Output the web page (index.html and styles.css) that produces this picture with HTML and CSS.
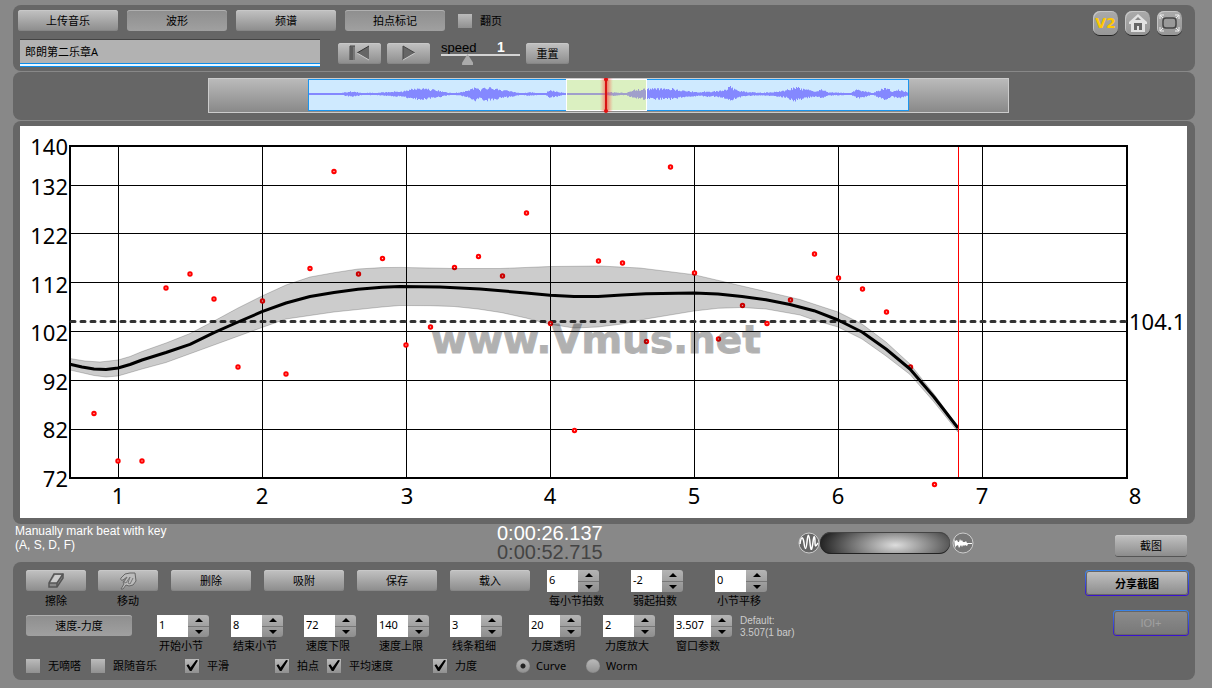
FILE: index.html
```html
<!DOCTYPE html>
<html lang="zh-CN">
<head>
<meta charset="utf-8">
<title>Vmus.net</title>
<link rel="stylesheet" href="styles.css">
</head>
<body>
<header class="panel header">
  <div class="header-main">
    <div class="menu-row">
      <button class="btn wide">上传音乐</button>
      <button class="btn wide pressed">波形</button>
      <button class="btn wide">频谱</button>
      <button class="btn wide pressed">拍点标记</button>
      <label class="check flip"><input type="checkbox">翻页</label>
    </div>
    <div class="play-row">
      <input class="track-name" type="text" value="郎朗第二乐章A" aria-label="曲目">
      <button class="btn small" aria-label="回到开头">
        <svg width="22" height="16" viewBox="0 0 22 16"><path d="M1 1h5v14H1z" fill="#777"/><path d="M1 15V1h5M3 2v13" fill="none" stroke="#444"/><path d="M20 1v14L8 8z" fill="#666"/><path d="M20 1L8 8" stroke="#333"/><path d="M8 8l12 7" stroke="#ccc"/></svg>
      </button>
      <button class="btn small" aria-label="播放">
        <svg width="16" height="16" viewBox="0 0 16 16"><path d="M2 1v14l12-7z" fill="#666"/><path d="M2 15V1l12 7" fill="none" stroke="#444"/><path d="M14 8L2 15" stroke="#ccc"/></svg>
      </button>
      <div class="speed">
        <label for="speed">speed</label><output for="speed">1</output>
        <input id="speed" type="range" min="0" max="100" value="31">
      </div>
      <button class="btn small">重置</button>
    </div>
  </div>
  <nav class="corner">
    <button class="tile v2">V2</button>
    <button class="tile" aria-label="主页">
      <svg width="22" height="20" viewBox="0 0 22 20"><path d="M2 9l9-8 9 8v2h-2v8H4v-8H2z" fill="#e2e2e2"/><path d="M7 17v-7h8v7h-3v-4h-2v4z" fill="#666"/><path d="M8 7l3-3 3 3z" fill="#888"/></svg>
    </button>
    <button class="tile" aria-label="全屏">
      <svg width="23" height="20" viewBox="0 0 23 20" fill="none"><rect x="5" y="5" width="13" height="10" rx="3" fill="#999" stroke="#444" stroke-width="1.5"/><path d="M2 6V2h4M2 2l3 3M17 2h4v4M21 2l-3 3M2 14v4h4M2 18l3-3M17 18h4v-4M21 18l-3-3" stroke="#eee"/></svg>
    </button>
  </nav>
</header>

<section class="panel overview">
  <svg class="overview-svg" viewBox="208 78 801 35">
    <defs>
      <linearGradient id="steel" x1="0" y1="0" x2="0" y2="1"><stop offset="0" stop-color="#bbb"/><stop offset="1" stop-color="#888"/></linearGradient>
      <linearGradient id="glow"><stop offset="0" stop-color="#f55" stop-opacity="0"/><stop offset=".5" stop-color="#f22" stop-opacity=".6"/><stop offset="1" stop-color="#f55" stop-opacity="0"/></linearGradient>
    </defs>
    <rect x="208.5" y="78.5" width="800" height="34" fill="url(#steel)" stroke="#ccc"/>
    <rect x="308.5" y="79.5" width="600" height="31" fill="#cfeaff" stroke="#1b95ee"/>
    <path id="wave" fill="#8488ff"/>
    <rect x="566.5" y="79.5" width="80" height="31" fill="#e2f3a0" fill-opacity=".65" stroke="#fff"/>
    <path id="wave-soft" fill="#a09fcb"/>
    <rect x="600" y="78" width="13" height="34" fill="url(#glow)"/>
    <path d="M606 79v32" stroke="#d81414" stroke-width="2"/>
    <circle cx="606" cy="79.5" r="2" fill="#e01010"/><circle cx="606" cy="111" r="2" fill="#e01010"/>
  </svg>
</section>

<main class="panel chart">
  <svg class="chart-svg" viewBox="20 126 1167 392">
    <g class="grid">
      <path d="M70 185.5H1127M70 233.5H1127M70 282.5H1127M70 331.5H1127M70 380.5H1127M70 429.5H1127M118.5 146V478M262.5 146V478M406.5 146V478M550.5 146V478M694.5 146V478M838.5 146V478M982.5 146V478"/>
      <rect class="frame" x="70" y="146" width="1057" height="332"/>
    </g>
    <path class="average" d="M71 321.5H1126"/>
    <g class="beats">
      <circle cx="94" cy="413.5"/><circle cx="118" cy="461"/><circle cx="142" cy="461"/><circle cx="166" cy="288"/><circle cx="190" cy="274"/><circle cx="214" cy="299"/><circle cx="238" cy="367"/><circle cx="262.5" cy="301"/><circle cx="286" cy="374"/><circle cx="310" cy="268.5"/><circle cx="334" cy="171.5"/><circle cx="358.5" cy="274"/><circle cx="382.5" cy="258.5"/>
      <circle cx="406" cy="345"/><circle cx="430.5" cy="327"/><circle cx="454.5" cy="267.5"/><circle cx="478.5" cy="256.5"/><circle cx="502.5" cy="276"/><circle cx="526.5" cy="213"/><circle cx="550.5" cy="323.5"/><circle cx="574.5" cy="430.5"/><circle cx="598.5" cy="261"/><circle cx="622.5" cy="263"/><circle cx="646.5" cy="341.5"/><circle cx="670.5" cy="167"/><circle cx="694.5" cy="273"/><circle cx="718.5" cy="339"/><circle cx="742.5" cy="305.5"/><circle cx="767" cy="323.5"/><circle cx="790.5" cy="300"/>
      <circle cx="814.5" cy="254"/><circle cx="838.5" cy="278"/><circle cx="862.5" cy="289"/><circle cx="886.5" cy="312"/><circle cx="910.5" cy="367"/><circle cx="934.5" cy="484.5"/>
    </g>
    <polygon class="band" points="70,358.5 85,361 100,362 118,360 130,356.5 142,351.5 166,343 190,333.5 214,321 238,308 262,296 286,285 310,277 334,272.7 358,269 382,267.6 400,267.4 454,268.5 500,268.5 550,266.5 600,266 640,268 694,274.7 742,286 800,299.5 838,312 862,324 886,342 910,364 934,394 958,427 958,432 934,402 910,374.5 886,356 862,339 838,327 814,320 800,315 766,309 742,307.5 718,308.3 694,311 646,319 622,324 598,327 574,328 550,324.3 526,318 502,312.7 478,309 454,306.5 430,305.7 400,305.5 382,307 334,312 286,319 262,327.5 214,345 166,362.5 142,369 118,376 106,377 94,375.5 70,370"/>
    <polyline class="tempo" points="70,364.3 82,367 94,369 106,369.5 118,368 130,364.5 142,360 166,352.5 190,344.3 214,332.7 238,322 262,311.7 286,303 310,296.5 334,292.5 358,289.3 382,287.2 400,286.5 440,287 480,289 526,293 550,295.3 574,296.5 598,296.5 622,295 646,293.7 694,293 718,294 742,296.5 766,299.7 790,304.5 814,310.7 838,320 862,332 886,349 910,369 934,397 958,428"/>
    <text class="watermark" x="431" y="353">www.Vmus.net</text>
    <path d="M958.5 147V477" stroke="#f00"/>
    <g class="axis y-axis">
      <text x="68" y="155">140</text><text x="68" y="195">132</text><text x="68" y="244">122</text><text x="68" y="293">112</text><text x="68" y="341">102</text><text x="68" y="390">92</text><text x="68" y="438">82</text><text x="68" y="487">72</text>
    </g>
    <g class="axis x-axis">
      <text x="118" y="504">1</text><text x="262" y="504">2</text><text x="407" y="504">3</text><text x="550" y="504">4</text><text x="694" y="504">5</text><text x="838" y="504">6</text><text x="982" y="504">7</text><text x="1135" y="504">8</text>
    </g>
    <text class="axis" x="1129" y="330">104.1</text>
  </svg>
</main>

<section class="status">
  <p class="hint">Manually mark beat with key<br>(A, S, D, F)</p>
  <div class="clock"><div>0:00:26.137</div><div class="total">0:00:52.715</div></div>
  <div class="zoom">
    <svg width="22" height="24" viewBox="0 0 22 24" fill="none"><circle cx="11" cy="12" r="10" fill="#666" stroke="#ccc"/><path d="M2 13c1-8 3-8 4-1s2 8 3-1 2-9 3 1 2 7 3-1 2-6 2 0 1 4 3 1" stroke="#fff" stroke-width="1.5"/></svg>
    <div class="zoom-bar"></div>
    <svg width="24" height="24" viewBox="0 0 24 24"><circle cx="13" cy="12" r="10" fill="#777" stroke="#ccc"/><path d="M4 7l1 3 2-1 1 2h1l1-3 1 2 1-1 1 2h2l1-1 1 2h5v1h-4l-1 2-2-1-1 1-1-1-1 2-1-2-2 3-1-3-2 1-1 2z" fill="#fff"/></svg>
  </div>
  <button class="btn snapshot">截图</button>
</section>

<section class="panel controls">
  <div class="control-rows">
    <div class="row-tools">
      <div class="tools">
        <div class="tool"><button class="btn" aria-labelledby="l-erase"><svg width="18" height="17" viewBox="0 0 18 17"><path d="M7 2h9v4l-6 9H2v-4z" fill="#888" stroke="#555" stroke-width="1.5"/><path d="M8 3h7l-5 8H3z" fill="#ccc"/><path d="M2 11h8v4M10 11l6-9" fill="none" stroke="#555" stroke-width="1.5"/></svg></button><span id="l-erase">擦除</span></div>
        <div class="tool"><button class="btn" aria-labelledby="l-move"><svg width="18" height="18" viewBox="0 0 18 18"><path d="M2 17l3-5-1-2 4-5-4 3c-2 1-3-1-2-2l4-4 5-1h5l1 8-3 4-4 1-3-1-3 4z" fill="#bbb" stroke="#666"/><path d="M8 5l-3 5 2 1 4-6M11 5l-2 6 2 1 3-6" fill="none" stroke="#777"/></svg></button><span id="l-move">移动</span></div>
      </div>
      <div class="actions">
        <button class="btn">删除</button><button class="btn">吸附</button><button class="btn">保存</button><button class="btn">载入</button>
      </div>
      <div class="bar-fields">
        <div class="field"><span class="spin"><input id="f1" type="text" value="6"><span class="arrows"><button class="up" aria-label="+"></button><button class="down" aria-label="-"></button></span></span><label for="f1">每小节拍数</label></div>
        <div class="field"><span class="spin"><input id="f2" type="text" value="-2"><span class="arrows"><button class="up" aria-label="+"></button><button class="down" aria-label="-"></button></span></span><label for="f2">弱起拍数</label></div>
        <div class="field"><span class="spin"><input id="f3" type="text" value="0"><span class="arrows"><button class="up" aria-label="+"></button><button class="down" aria-label="-"></button></span></span><label for="f3">小节平移</label></div>
      </div>
    </div>
    <div class="row-params">
      <button class="btn mode pressed">速度-力度</button>
      <div class="field"><span class="spin"><input id="p1" type="text" value="1"><span class="arrows"><button class="up" aria-label="+"></button><button class="down" aria-label="-"></button></span></span><label for="p1">开始小节</label></div>
      <div class="field"><span class="spin"><input id="p2" type="text" value="8"><span class="arrows"><button class="up" aria-label="+"></button><button class="down" aria-label="-"></button></span></span><label for="p2">结束小节</label></div>
      <div class="field"><span class="spin"><input id="p3" type="text" value="72"><span class="arrows"><button class="up" aria-label="+"></button><button class="down" aria-label="-"></button></span></span><label for="p3">速度下限</label></div>
      <div class="field"><span class="spin"><input id="p4" type="text" value="140"><span class="arrows"><button class="up" aria-label="+"></button><button class="down" aria-label="-"></button></span></span><label for="p4">速度上限</label></div>
      <div class="field"><span class="spin"><input id="p5" type="text" value="3"><span class="arrows"><button class="up" aria-label="+"></button><button class="down" aria-label="-"></button></span></span><label for="p5">线条粗细</label></div>
      <div class="field"><span class="spin"><input id="p6" type="text" value="20"><span class="arrows"><button class="up" aria-label="+"></button><button class="down" aria-label="-"></button></span></span><label for="p6">力度透明</label></div>
      <div class="field"><span class="spin"><input id="p7" type="text" value="2"><span class="arrows"><button class="up" aria-label="+"></button><button class="down" aria-label="-"></button></span></span><label for="p7">力度放大</label></div>
      <div class="field"><span class="spin long"><input id="p8" type="text" value="3.507"><span class="arrows"><button class="up" aria-label="+"></button><button class="down" aria-label="-"></button></span></span><label for="p8">窗口参数</label></div>
      <p class="default">Default:<br>3.507(1 bar)</p>
    </div>
    <div class="row-flags">
      <label class="check"><input type="checkbox">无嘀嗒</label>
      <label class="check"><input type="checkbox">跟随音乐</label>
      <label class="check"><input type="checkbox" checked>平滑</label>
      <label class="check"><input type="checkbox" checked>拍点</label>
      <label class="check"><input type="checkbox" checked>平均速度</label>
      <label class="check"><input type="checkbox" checked>力度</label>
      <label class="check radio"><input type="radio" name="view" checked>Curve</label>
      <label class="check radio"><input type="radio" name="view">Worm</label>
    </div>
  </div>
  <div class="share">
    <button class="btn outlined share-btn">分享截图</button>
    <button class="btn outlined ioi" disabled>IOI+</button>
  </div>
</section>
<script src="script.js"></script>
</body>
</html>
```
FILE: styles.css
```css
* { box-sizing: border-box; }

body {
  margin: 0;
  padding: 5px 17px 7px 13px;
  background: #888;
  color: #000;
  font: 11px/15px "Noto Sans", "Noto Sans CJK SC", sans-serif;
}

button, input { font: inherit; color: inherit; margin: 0; }
p { margin: 0; }
svg { display: block; }

.panel {
  background: #666;
  border-radius: 8px;
  margin-bottom: 1px;
}

.btn {
  display: flex;
  align-items: center;
  justify-content: center;
  height: 21px;
  padding: 0;
  border: 0;
  border-radius: 3px;
  background: linear-gradient(#c2c2c2, #8c8c8c);
  box-shadow: inset 0 1px #c8c8c8, inset 0 -1px #868686;
  white-space: nowrap;
}
.btn.pressed {
  background: linear-gradient(#8e8e8e, #a0a0a0);
  box-shadow: inset 0 1px #b0b0b0;
}

/* Header */
.header {
  display: flex;
  justify-content: space-between;
  padding: 5px 13px 4px 5px;
}
.menu-row { display: flex; gap: 9px; }
.wide { width: 100px; }
.flip { margin-left: 4px; }
.play-row {
  display: flex;
  align-items: center;
  gap: 6px;
  margin-top: 8px;
  padding-left: 2px;
}
.track-name {
  width: 300px;
  height: 28px;
  margin-right: 12px;
  padding: 0 5px 5px;
  border: 0;
  border-top: 1px solid #444;
  border-bottom: 1px solid #0b8dea;
  background: linear-gradient(#b2b2b2 23px, #0b8dea 23px, #0b8dea 24px, #eaf6ff 24px);
}
.small { width: 43px; }
.speed {
  display: grid;
  grid-template-columns: 1fr 23px;
  width: 79px;
  margin: 0 0 0 5px;
  font: 13px/13px "Liberation Sans", sans-serif;
}
.speed output { color: #fff; font-size: 14px; font-weight: bold; }
.speed input {
  grid-column: 1 / 3;
  appearance: none;
  width: 79px;
  height: 11px;
  background: linear-gradient(#d4d4d4, #d4d4d4) 0 0 / 100% 2px no-repeat;
}
.speed input::-webkit-slider-thumb {
  appearance: none;
  width: 11px;
  height: 11px;
  background: #aaa;
  clip-path: polygon(50% 0, 100% 80%, 100% 100%, 0 100%, 0 80%);
}

.corner { display: flex; gap: 7px; padding-top: 1px; }
.tile {
  display: flex;
  align-items: center;
  justify-content: center;
  width: 25px;
  height: 24px;
  padding: 0;
  border: 0;
  border-radius: 7px;
  background: linear-gradient(#aaa, #979797);
  box-shadow: inset 1px 1px #c4c4c4, 0 1px #222;
}
.v2 { color: #ffc800; font: bold 14px/24px "DejaVu Sans", sans-serif; }

/* Waveform overview */
.overview { padding: 6px 186px 7px 195px; }
.overview-svg { width: 100%; }

/* Tempo chart */
.chart { padding: 5px 8px 6px 7px; margin: 0; }
.chart-svg { width: 100%; background: #fff; }
.grid { fill: none; stroke: #000; stroke-width: 1; shape-rendering: crispEdges; }
.frame { stroke-width: 2; }
.average { stroke: #333; stroke-width: 3; stroke-dasharray: 4 6; stroke-linecap: round; }
.beats { fill: #fcc; stroke: #f00; stroke-width: 2; }
.beats circle { r: 1.7px; }
.band { fill: rgba(0, 0, 0, .2); stroke: rgba(0, 0, 0, .2); }
.tempo { fill: none; stroke: #000; stroke-width: 3; stroke-linejoin: round; }
.watermark { font: bold 39px "DejaVu Sans", sans-serif; fill: #000; stroke: #000; stroke-width: 1; opacity: .3; }
.axis { font: 22px "Noto Sans", sans-serif; }
.y-axis { text-anchor: end; }
.x-axis { text-anchor: middle; }

/* Status strip */
.status {
  display: grid;
  grid-template-columns: 482px 301px 1fr auto;
  height: 38px;
  padding: 0 8px 0 2px;
  color: #fff;
}
.hint { font: 12px/14px "Liberation Sans", sans-serif; }
.clock { font: 20px/19px "Liberation Sans", sans-serif; }
.total { color: #444; }
.zoom { display: flex; align-items: center; }
.zoom-bar {
  width: 130px;
  height: 22px;
  border-radius: 11px;
  background: radial-gradient(ellipse 76px 28px at 58% 60%, #ddd, #777 55%, #222);
  box-shadow: inset 0 -1px #222, inset 0 1px #444;
}
.snapshot { align-self: center; width: 72px; margin-top: 4px; color: #000; box-shadow: inset 0 1px #c8c8c8, 0 1px #555; }

/* Controls */
.controls {
  display: flex;
  justify-content: space-between;
  margin: 0;
  padding: 8px 6px 7px 13px;
}
.row-tools { display: flex; }
.tools { display: flex; gap: 12px; }
.tool { display: flex; flex-direction: column; align-items: center; gap: 2px; }
.tool .btn { width: 60px; }
.actions { display: flex; gap: 13px; margin-left: 13px; }
.actions .btn { width: 80px; }
.bar-fields { display: flex; gap: 32px; margin-left: 17px; }
.bar-fields .field { width: 52px; }
.field { display: flex; flex-direction: column; gap: 1px; white-space: nowrap; }
.field label { padding-left: 2px; }
.spin { display: flex; width: 52px; height: 22px; }
.spin.long { width: 58px; }
.spin input {
  flex: 1;
  min-width: 0;
  height: 22px;
  padding: 0 0 4px 2px;
  border: 0;
  background: #fff;
}
.arrows {
  display: grid;
  width: 21px;
  border-radius: 0 3px 3px 0;
  background: linear-gradient(#b4b4b4, #8e8e8e);
}
.arrows button {
  display: flex;
  align-items: center;
  justify-content: center;
  padding: 0;
  border: 0;
  background: none;
}
.arrows .up { border-bottom: 1px solid #777; }
.arrows button::before { content: ""; border: 4px solid transparent; }
.arrows .up::before { border-top: 0; border-bottom-color: #000; }
.arrows .down::before { border-bottom: 0; border-top-color: #000; }

.row-params {
  display: grid;
  grid-template-columns: 131px 74px 73px 73px 73px 79px 74px 71px 66px auto;
  margin-top: 7px;
}
.mode { width: 106px; }
.default { color: #ccc; font: 10px/12px "Liberation Sans", sans-serif; }

.row-flags {
  display: grid;
  grid-template-columns: 65px 94px 90px 52px 106px 83px 70px auto;
  margin-top: 5px;
}
.check { display: flex; align-items: center; gap: 8px; white-space: nowrap; }
.check input {
  appearance: none;
  width: 14px;
  height: 14px;
  background: linear-gradient(#bbb, #909090);
}
.check input[type="checkbox"]:checked {
  display: grid;
  place-items: center;
}
.check input[type="checkbox"]:checked::before {
  content: "";
  width: 12px;
  height: 11px;
  background: #000;
  clip-path: polygon(4% 48%, 20% 38%, 38% 68%, 84% 0, 100% 4%, 46% 100%, 32% 100%);
}
.radio { gap: 6px; }
.check input[type="radio"] { border-radius: 50%; box-shadow: inset 0 0 1px #666; }
.check input[type="radio"]:checked {
  background: radial-gradient(circle, #222 2px, transparent 3px), linear-gradient(#bbb, #909090);
}

.share { display: flex; flex-direction: column; align-items: flex-end; gap: 14px; }
.outlined {
  height: 26px;
  border: 1px solid transparent;
  border-radius: 4px;
  background: linear-gradient(#c2c2c2, #8c8c8c) padding-box, linear-gradient(#3a86e8, #3a10d0) border-box;
  box-shadow: inset 0 0 0 1px #666;
}
.share-btn { width: 104px; font-weight: bold; }
.ioi {
  width: 76px;
  color: #a0a0a0;
  font-family: "Liberation Sans", sans-serif;
  background: linear-gradient(#8c8c8c, #787878) padding-box, linear-gradient(#3a86e8, #3a10d0) border-box;
}
```
FILE: script.js
```js
// Loudness envelope of the recording: [x, half height] pairs.
const envelope = [
  [309, .5], [338, .5], [345, 2], [350, 3], [358, 2], [362, 1], [368, 1.5], [374, 1], [384, 2],
  [395, 3], [402, 2.5], [406, 4], [414, 6], [424, 6], [438, 4], [445, 2], [452, 1], [460, 2],
  [468, 4], [475, 8], [480, 4], [484, 8], [495, 6], [505, 4], [512, 3], [520, 1], [530, 2],
  [538, 1], [545, 1], [549, 4], [556, 3], [565, 1], [580, .7], [605, .7], [608, 2], [616, 2],
  [626, 1], [630, 4], [645, 6], [660, 6], [672, 6], [680, 4], [700, 2], [705, 3], [715, 3],
  [722, 4], [730, 8], [735, 5], [742, 3], [750, 2], [762, 1.5], [770, 2], [785, 4], [795, 8],
  [805, 5], [815, 3], [821, 5], [828, 2], [840, 1.5], [850, 1], [857, 5], [865, 3], [872, 1],
  [880, 5], [886, 7], [892, 3], [898, 5], [908, 2]
];

function amplitude(x) {
  const i = Math.max(1, envelope.findIndex(p => p[0] >= x));
  const [x0, a0] = envelope[i - 1];
  const [x1, a1] = envelope[i];
  return a0 + (a1 - a0) * (x - x0) / (x1 - x0);
}

// Repeatable noise between 0.6 and 1.
function grain(n) {
  const s = Math.sin(n * 127.1) * 43758.5453;
  return .6 + .4 * (s - Math.floor(s));
}

function wavePath(from, to) {
  let d = "";
  for (let x = from; x < to; x++) {
    const a = amplitude(x);
    const up = Math.max(1, a * grain(x));
    const down = Math.max(1, a * grain(x + 1000));
    d += `M${x} ${94 - up}h1v${up + down}h-1z`;
  }
  return d;
}

document.getElementById("wave").setAttribute("d", wavePath(309, 566) + wavePath(647, 908));
document.getElementById("wave-soft").setAttribute("d", wavePath(567, 646));
```
